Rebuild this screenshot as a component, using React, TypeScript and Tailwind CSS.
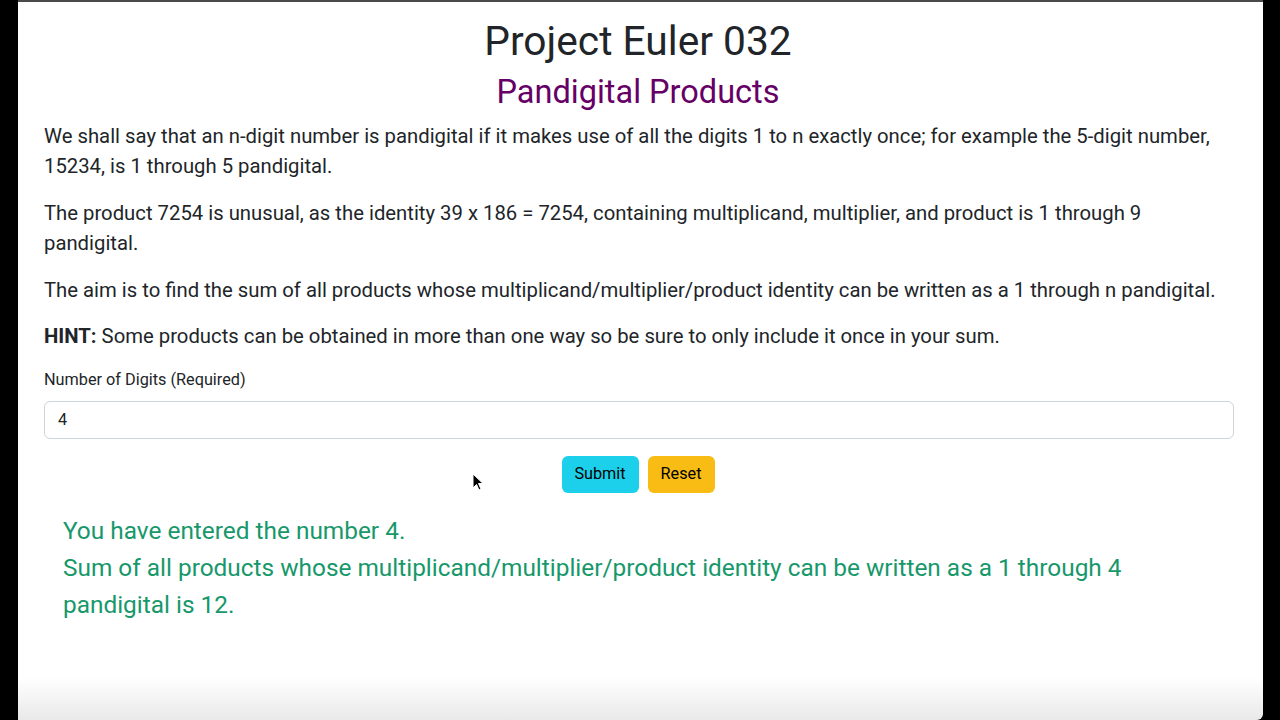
import React from "react";

export default function App() {
  return (
    <div className="w-[1280px] h-[720px] bg-black overflow-hidden relative" style={{ fontFamily: "Roboto, 'Liberation Sans', sans-serif" }}>
      <div className="ml-[18px] w-[1245px] h-[720px] border-t-2 border-[#4a4a4a] rounded-br-md bg-[linear-gradient(to_bottom,#ffffff_94%,#e9e9e9)] text-[#212529] relative">
        <div className="pl-[26px] pr-[31px]">
          <h1 className="mt-[15px] text-center text-[40.7px] leading-[49px] font-normal">Project Euler 032</h1>
          <h2 className="mt-[6.5px] text-center text-[32.5px] leading-[39px] text-[#660066]">Pandigital Products</h2>
          <div className="mt-[9px] text-[20.3px] leading-[30.5px]">
            <p className="mb-[16px]">
              We shall say that an n-digit number is pandigital if it makes use of all the digits 1 to n exactly once; for example the 5-digit number, 15234, is 1 through 5 pandigital.
            </p>
            <p className="mb-[16px]">
              The product 7254 is unusual, as the identity 39 x 186 = 7254, containing multiplicand, multiplier, and product is 1 through 9 pandigital.
            </p>
            <p className="mb-[15.5px]">
              The aim is to find the sum of all products whose multiplicand/multiplier/product identity can be written as a 1 through n pandigital.
            </p>
            <p className="mb-[16.5px]">
              <span className="font-bold">HINT:</span> Some products can be obtained in more than one way so be sure to only include it once in your sum.
            </p>
          </div>
          <label className="block text-[16.25px] leading-[24.4px] mb-[9px]">Number of Digits (Required)</label>
          <div className="w-[1190px] h-[38px] border border-[#ced4da] rounded-[6px] px-[13px] flex items-center text-[16.25px]">4</div>
          <div className="mt-[17px] flex justify-center gap-[9px]">
            <button className="w-[77px] h-[37px] rounded-[6px] bg-[#1ccfea] text-black text-[16.25px]">Submit</button>
            <button className="w-[67px] h-[37px] rounded-[6px] bg-[#f8bc14] text-black text-[16.25px]">Reset</button>
          </div>
          <div className="mt-[19.5px] pl-[19px] pr-[15px] text-[24.4px] leading-[37px] text-[#17986b]">
            <div>You have entered the number 4.</div>
            <div>Sum of all products whose multiplicand/multiplier/product identity can be written as a 1 through 4 pandigital is 12.</div>
          </div>
        </div>
      </div>
      <svg className="absolute left-[472px] top-[473px]" width="12" height="18" viewBox="0 0 12 18">
        <path d="M1 1 L1 15 L4.5 11.5 L7 17 L9 16 L6.5 10.5 L11 10.5 Z" fill="#000" stroke="#fff" strokeWidth="1" />
      </svg>
    </div>
  );
}
